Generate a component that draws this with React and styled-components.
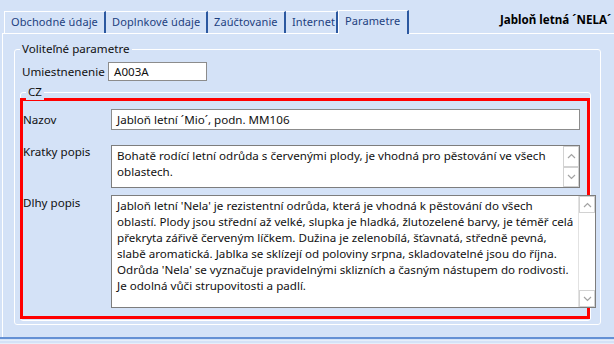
import React from 'react';
import styled, { createGlobalStyle } from 'styled-components';

const BG = '#d4e2f7';

const GlobalStyle = createGlobalStyle`
  html, body { margin: 0; padding: 0; background: ${BG}; }
  body { font-family: "Noto Sans", "Open Sans", sans-serif; font-size: 11.6px; }
  * { box-sizing: border-box; }
`;

const Window = styled.div`
  width: 614px;
  height: 344px;
  overflow: hidden;
  background: ${BG};
  display: flex;
  flex-direction: column;
  color: #111;
`;

const TabBar = styled.div`
  height: 33px;
  flex-shrink: 0;
  display: flex;
  align-items: flex-end;
  padding-left: 4px;
  position: relative;
  z-index: 1;
`;

const Tab = styled.div`
  flex-shrink: 0;
  width: ${(p) => p.$w}px;
  height: ${(p) => (p.$active ? 24 : 22)}px;
  margin-bottom: ${(p) => (p.$active ? -1 : 0)}px;
  border-top: 1px solid #fff;
  border-left: ${(p) => (p.$edge ? '1px solid #fff' : 'none')};
  border-right: 2px solid #2c58a0;
  padding-left: 6px;
  background: ${BG};
  color: #1d3f80;
  font-size: 11px;
  letter-spacing: 0.1px;
  line-height: 20px;
  white-space: nowrap;
`;

const Title = styled.div`
  align-self: flex-start;
  margin: 12px 0 0 91px;
  flex-shrink: 0;
  font-weight: bold;
  line-height: 16px;
  white-space: nowrap;
  color: #000;
`;

const Panel = styled.div`
  flex: 1;
  margin-left: 2px;
  border-top: 1px solid #fff;
  border-left: 1px solid #fff;
  padding: 15px 13px 0 11px;
`;

const GroupBox = styled.div`
  position: relative;
  border: 1px solid #fff;
  border-radius: 3px;
  padding: ${(p) => p.$pad};
  margin-top: ${(p) => p.$mt || 0}px;
`;

const Legend = styled.span`
  position: absolute;
  top: -9px;
  left: 5px;
  padding: 0 2px;
  line-height: 16px;
  background: ${BG};
  color: #111;
`;

const FieldRow = styled.div`
  display: flex;
  align-items: center;
  padding-left: 2px;
  height: 19px;
`;

const Label = styled.div`
  width: ${(p) => p.$w}px;
  flex-shrink: 0;
  line-height: 16px;
  margin-top: ${(p) => p.$mt || 0}px;
  color: #111;
`;

const Input = styled.div`
  width: ${(p) => p.$w || 'auto'};
  flex: ${(p) => (p.$grow ? 1 : 'none')};
  height: ${(p) => p.$h}px;
  border: 1px solid #8c8c8c;
  background: #fff;
  padding-left: 5px;
  line-height: ${(p) => p.$h - 2}px;
  white-space: nowrap;
  overflow: hidden;
`;

const Highlight = styled.div`
  margin-left: -1px;
  height: 221px;
  border: 3px solid #ff0000;
  padding: 8px 7px 0 0;
  display: flex;
  flex-direction: column;
`;

const FormRow = styled.div`
  display: flex;
  align-items: ${(p) => (p.$center ? 'center' : 'flex-start')};
  margin-top: ${(p) => p.$mt || 0}px;
`;

const TextBox = styled.div`
  flex: 1;
  height: ${(p) => p.$h}px;
  border: 1px solid #7d7d7d;
  background: #fff;
  display: flex;
`;

const TextBody = styled.div`
  flex: 1;
  padding: 2px 5px 0;
  line-height: 16px;
  white-space: pre;
  overflow: hidden;
  color: #111;
`;

const ScrollBar = styled.div`
  width: 17px;
  display: flex;
  flex-direction: column;
  justify-content: space-between;
  border-left: 1px solid ${(p) => (p.$track ? '#e2e2e2' : 'transparent')};
`;

const ScrollButton = styled.div`
  flex: ${(p) => (p.$fill ? 1 : 'none')};
  height: ${(p) => (p.$fill ? 'auto' : '17px')};
  border: 1px solid #d2d2d2;
  background: #fff;
  display: flex;
  align-items: center;
  justify-content: center;
`;

const Footer = styled.div`
  height: 7px;
  flex-shrink: 0;
  border-top: 2px solid #6490d4;
  background: linear-gradient(
    to bottom,
    ${BG} 0 1px,
    #e6eefa 1px 2px,
    ${BG} 2px 4px,
    #e6eefa 4px 5px
  );
`;

const Chevron = ({ down }) => (
  <svg width="9" height="6" viewBox="0 0 9 6">
    <polyline
      points={down ? '1,1 4.5,4.5 8,1' : '1,5 4.5,1.5 8,5'}
      fill="none"
      stroke="#a3a3a3"
      strokeWidth="1.2"
    />
  </svg>
);

const Scroller = ({ fill }) => (
  <ScrollBar $track={!fill}>
    <ScrollButton $fill={fill}>
      <Chevron />
    </ScrollButton>
    <ScrollButton $fill={fill}>
      <Chevron down />
    </ScrollButton>
  </ScrollBar>
);

const tabs = [
  { label: 'Obchodné údaje', w: 102, edge: true },
  { label: 'Doplnkové údaje', w: 102 },
  { label: 'Zaúčtovanie', w: 78 },
  { label: 'Internet', w: 52 },
  { label: 'Parametre', w: 71, active: true },
];

const shortText = [
  'Bohatě rodící letní odrůda s červenými plody, je vhodná pro pěstování ve všech',
  'oblastech.',
].join('\n');

const longText = [
  "Jabloň letní 'Nela' je rezistentní odrůda, která je vhodná k pěstování do všech",
  'oblastí. Plody jsou střední až velké, slupka je hladká, žlutozelené barvy, je téměř celá',
  'překryta zářivě červeným líčkem. Dužina je zelenobílá, šťavnatá, středně pevná,',
  'slabě aromatická. Jablka se sklízejí od poloviny srpna, skladovatelné jsou do října.',
  "Odrůda 'Nela' se vyznačuje pravidelnými sklizních a časným nástupem do rodivosti.",
  'Je odolná vůči strupovitosti a padlí.',
].join('\n');

export default function App() {
  return (
    <>
      <GlobalStyle />
      <Window>
        <TabBar>
          {tabs.map((t) => (
            <Tab key={t.label} $w={t.w} $edge={t.edge || t.active} $active={t.active}>
              {t.label}
            </Tab>
          ))}
          <Title>Jabloň letná ´NELA´ podn. MM106</Title>
        </TabBar>
        <Panel>
          <GroupBox $pad="12px 9px 3px 5px">
            <Legend>Voliteľné parametre</Legend>
            <FieldRow>
              <Label $w={86}>Umiestnenenie</Label>
              <Input $w="99px" $h={19}>A003A</Input>
            </FieldRow>
            <GroupBox $pad="5px 0 1px 0" $mt={11}>
              <Legend>CZ</Legend>
              <Highlight>
                <FormRow $center>
                  <Label $w={88}>Nazov</Label>
                  <Input $grow $h={21}>Jabloň letní ´Mio´, podn. MM106</Input>
                </FormRow>
                <FormRow $mt={15}>
                  <Label $w={88} $mt={-1}>Kratky popis</Label>
                  <TextBox $h={43}>
                    <TextBody>{shortText}</TextBody>
                    <Scroller fill />
                  </TextBox>
                </FormRow>
                <FormRow $mt={7}>
                  <Label $w={88}>Dlhy popis</Label>
                  <TextBox $h={113}>
                    <TextBody>{longText}</TextBody>
                    <Scroller />
                  </TextBox>
                </FormRow>
              </Highlight>
            </GroupBox>
          </GroupBox>
        </Panel>
        <Footer />
      </Window>
    </>
  );
}
